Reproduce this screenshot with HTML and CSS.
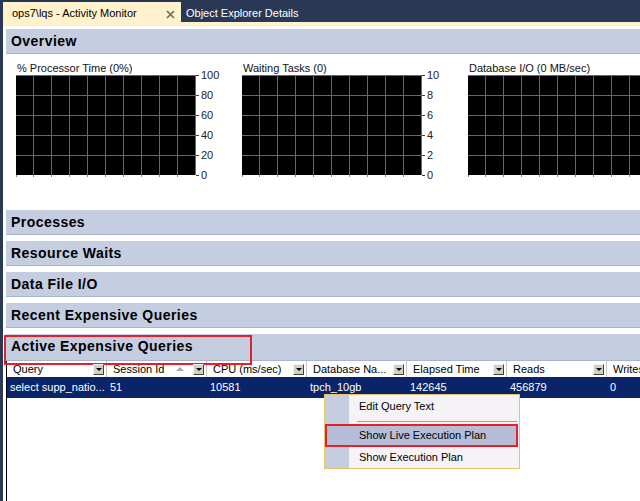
FILE: index.html
```html
<!DOCTYPE html>
<html>
<head>
<meta charset="utf-8">
<link rel="stylesheet" href="styles.css">
</head>
<body>
<div class="tabbar">
  <div class="tab tab-active">
    <span>ops7\lqs - Activity Monitor</span>
    <svg class="close" width="9" height="9" viewBox="0 0 9 9"><path d="M1 1L8 8M8 1L1 8" stroke="#6b6b6b" stroke-width="1.7"/></svg>
  </div>
  <div class="tab">Object Explorer Details</div>
</div>
<div class="panel">
  <div class="strip"></div>
  <div class="content">
    <div class="section-header">Overview</div>
    <div class="charts">
      <div class="chart">
        <div class="chart-title">% Processor Time (0%)</div>
        <div class="chart-body">
          <div class="plot-col">
            <svg class="plot" width="180" height="102" viewBox="0 0 180 102" shape-rendering="crispEdges">
              <rect x="0" y="0" width="180" height="100" fill="#000"/>
              <g fill="#22962a">
                <rect x="17" y="0" width="1" height="100"/><rect x="35" y="0" width="1" height="100"/><rect x="53" y="0" width="1" height="100"/><rect x="71" y="0" width="1" height="100"/><rect x="89" y="0" width="1" height="100"/><rect x="107" y="0" width="1" height="100"/><rect x="125" y="0" width="1" height="100"/><rect x="143" y="0" width="1" height="100"/><rect x="161" y="0" width="1" height="100"/><rect x="179" y="0" width="1" height="100"/>
                <rect x="0" y="0" width="180" height="1"/><rect x="0" y="20" width="180" height="1"/><rect x="0" y="40" width="180" height="1"/><rect x="0" y="60" width="180" height="1"/><rect x="0" y="80" width="180" height="1"/>
              </g>
              <g fill="#8a8a8a">
                <rect x="0" y="100" width="1" height="2"/><rect x="17" y="100" width="1" height="2"/><rect x="35" y="100" width="1" height="2"/><rect x="53" y="100" width="1" height="2"/><rect x="71" y="100" width="1" height="2"/><rect x="89" y="100" width="1" height="2"/><rect x="107" y="100" width="1" height="2"/><rect x="125" y="100" width="1" height="2"/><rect x="143" y="100" width="1" height="2"/><rect x="161" y="100" width="1" height="2"/>
              </g>
            </svg>
          </div>
          <div class="rticks"></div>
          <div class="axis"><span>100</span><span>80</span><span>60</span><span>40</span><span>20</span><span>0</span></div>
        </div>
      </div>
      <div class="chart">
        <div class="chart-title">Waiting Tasks (0)</div>
        <div class="chart-body">
          <div class="plot-col">
            <svg class="plot" width="180" height="102" viewBox="0 0 180 102" shape-rendering="crispEdges">
              <rect x="0" y="0" width="180" height="100" fill="#000"/>
              <g fill="#22962a">
                <rect x="17" y="0" width="1" height="100"/><rect x="35" y="0" width="1" height="100"/><rect x="53" y="0" width="1" height="100"/><rect x="71" y="0" width="1" height="100"/><rect x="89" y="0" width="1" height="100"/><rect x="107" y="0" width="1" height="100"/><rect x="125" y="0" width="1" height="100"/><rect x="143" y="0" width="1" height="100"/><rect x="161" y="0" width="1" height="100"/><rect x="179" y="0" width="1" height="100"/>
                <rect x="0" y="0" width="180" height="1"/><rect x="0" y="20" width="180" height="1"/><rect x="0" y="40" width="180" height="1"/><rect x="0" y="60" width="180" height="1"/><rect x="0" y="80" width="180" height="1"/>
              </g>
              <g fill="#8a8a8a">
                <rect x="0" y="100" width="1" height="2"/><rect x="17" y="100" width="1" height="2"/><rect x="35" y="100" width="1" height="2"/><rect x="53" y="100" width="1" height="2"/><rect x="71" y="100" width="1" height="2"/><rect x="89" y="100" width="1" height="2"/><rect x="107" y="100" width="1" height="2"/><rect x="125" y="100" width="1" height="2"/><rect x="143" y="100" width="1" height="2"/><rect x="161" y="100" width="1" height="2"/>
              </g>
            </svg>
          </div>
          <div class="rticks"></div>
          <div class="axis"><span>10</span><span>8</span><span>6</span><span>4</span><span>2</span><span>0</span></div>
        </div>
      </div>
      <div class="chart">
        <div class="chart-title">Database I/O (0 MB/sec)</div>
        <div class="chart-body">
          <div class="plot-col">
            <svg class="plot" width="180" height="102" viewBox="0 0 180 102" shape-rendering="crispEdges">
              <rect x="0" y="0" width="180" height="100" fill="#000"/>
              <g fill="#22962a">
                <rect x="17" y="0" width="1" height="100"/><rect x="35" y="0" width="1" height="100"/><rect x="53" y="0" width="1" height="100"/><rect x="71" y="0" width="1" height="100"/><rect x="89" y="0" width="1" height="100"/><rect x="107" y="0" width="1" height="100"/><rect x="125" y="0" width="1" height="100"/><rect x="143" y="0" width="1" height="100"/><rect x="161" y="0" width="1" height="100"/><rect x="179" y="0" width="1" height="100"/>
                <rect x="0" y="0" width="180" height="1"/><rect x="0" y="20" width="180" height="1"/><rect x="0" y="40" width="180" height="1"/><rect x="0" y="60" width="180" height="1"/><rect x="0" y="80" width="180" height="1"/>
              </g>
              <g fill="#8a8a8a">
                <rect x="0" y="100" width="1" height="2"/><rect x="17" y="100" width="1" height="2"/><rect x="35" y="100" width="1" height="2"/><rect x="53" y="100" width="1" height="2"/><rect x="71" y="100" width="1" height="2"/><rect x="89" y="100" width="1" height="2"/><rect x="107" y="100" width="1" height="2"/><rect x="125" y="100" width="1" height="2"/><rect x="143" y="100" width="1" height="2"/><rect x="161" y="100" width="1" height="2"/>
              </g>
            </svg>
          </div>
        </div>
      </div>
    </div>
    <div class="section-header gap">Processes</div>
    <div class="section-header gap">Resource Waits</div>
    <div class="section-header gap">Data File I/O</div>
    <div class="section-header gap">Recent Expensive Queries</div>
    <div class="section-header tall marked">Active Expensive Queries</div>
    <div class="grid">
      <div class="grid-head">
        <div class="hcell"><span>Query</span><i class="dd"></i></div>
        <div class="hcell"><span>Session Id</span><i class="sort"></i><i class="dd"></i></div>
        <div class="hcell"><span>CPU (ms/sec)</span><i class="dd"></i></div>
        <div class="hcell"><span>Database Na...</span><i class="dd"></i></div>
        <div class="hcell"><span>Elapsed Time</span><i class="dd"></i></div>
        <div class="hcell"><span>Reads</span><i class="dd"></i></div>
        <div class="hcell"><span>Writes</span><i class="dd"></i></div>
      </div>
      <div class="grid-row selected">
        <div class="cell">select supp_natio...</div>
        <div class="cell">51</div>
        <div class="cell">10581</div>
        <div class="cell">tpch_10gb</div>
        <div class="cell">142645</div>
        <div class="cell">456879</div>
        <div class="cell">0</div>
      </div>
    </div>
  </div>
</div>
<div class="context-menu">
  <div class="menu-item first">Edit Query Text</div>
  <div class="menu-sep"></div>
  <div class="menu-item hover">Show Live Execution Plan</div>
  <div class="menu-item last">Show Execution Plan</div>
</div>
</body>
</html>
```

FILE: styles.css
```css
* { box-sizing: border-box; }
html, body {
  margin: 0;
  padding: 0;
}
body {
  width: 640px;
  height: 501px;
  overflow: hidden;
  background: #293955;
  font-family: "Liberation Sans", Arial, sans-serif;
  font-size: 11px;
  color: #000;
  position: relative;
}

/* tabs */
.tabbar {
  height: 22px;
  display: flex;
  align-items: flex-end;
  padding-left: 3px;
}
.tab {
  height: 20px;
  line-height: 22px;
  white-space: nowrap;
  color: #fff;
  padding-left: 5px;
}
.tab-active {
  width: 178px;
  background: #fff2cc;
  color: #000;
  padding: 0 6px 0 9px;
  display: flex;
  justify-content: space-between;
  align-items: flex-start;
}
.tab-active .close {
  margin-top: 8px;
}

/* panel */
.panel {
  margin-left: 3px;
  height: 479px;
  background: #fff;
  display: flex;
  flex-direction: column;
}
.strip {
  height: 4px;
  background: #fff1c9;
  flex-shrink: 0;
}
.content {
  flex: 1;
  padding: 3px 0 0 3px;
  display: flex;
  flex-direction: column;
  min-height: 0;
}

.section-header {
  height: 25px;
  flex-shrink: 0;
  background: #c5cde0;
  border-bottom: 1px solid #aab4cb;
  font-weight: bold;
  font-size: 14px;
  letter-spacing: 0.45px;
  line-height: 24px;
  padding-left: 5px;
  color: #000;
}
.section-header.gap { margin-bottom: 6px; }
.section-header.tall { height: 27px; }
.section-header.marked { position: relative; }
.section-header.marked::after {
  content: "";
  position: absolute;
  left: -2px;
  top: 1px;
  width: 244px;
  height: 26px;
  border: 2px solid #e6202a;
}

/* charts */
.charts {
  height: 156px;
  flex-shrink: 0;
  display: flex;
  padding: 7px 0 0 10px;
  overflow: hidden;
}
.chart {
  width: 226px;
  flex-shrink: 0;
  display: flex;
  flex-direction: column;
}
.chart-title {
  height: 14px;
  line-height: 14px;
  padding-left: 1px;
  color: #111;
  white-space: nowrap;
}
.chart-body {
  display: flex;
  align-items: flex-start;
}
.plot-col {
  flex-shrink: 0;
}
.plot { display: block; }
.rticks {
  width: 3px;
  height: 101px;
  flex-shrink: 0;
  background-image: linear-gradient(to bottom, #3a3a3a 1px, transparent 1px);
  background-size: 100% 20px;
  background-repeat: repeat-y;
}
.axis {
  margin-top: -6px;
  margin-left: 2px;
  height: 112px;
  display: flex;
  flex-direction: column;
  justify-content: space-between;
  line-height: 12px;
  color: #222;
}

/* grid */
.grid {
  flex: 1;
  border-left: 1px solid #000;
  background: #fff;
  min-height: 0;
  overflow: hidden;
}
.grid-head {
  height: 16px;
  display: flex;
  white-space: nowrap;
}
.hcell {
  width: 100px;
  flex-shrink: 0;
  display: flex;
  align-items: center;
  padding-left: 6px;
  border-right: 1px solid #c6c6c6;
  line-height: 16px;
}
.hcell span { margin-right: auto; }
.dd {
  width: 11px;
  height: 11px;
  margin-right: 2px;
  background: #d4d0c8;
  border-style: solid;
  border-width: 1px;
  border-color: #f4f4f4 #404040 #404040 #f4f4f4;
  position: relative;
  flex-shrink: 0;
}
.dd::after {
  content: "";
  position: absolute;
  left: 2px;
  top: 3px;
  border-left: 3px solid transparent;
  border-right: 3px solid transparent;
  border-top: 3px solid #000;
}
.sort {
  width: 0;
  height: 0;
  border-left: 4px solid transparent;
  border-right: 4px solid transparent;
  border-bottom: 4px solid #a9a9a9;
  margin-right: 9px;
}
.grid-row {
  height: 21px;
  display: flex;
  white-space: nowrap;
}
.grid-row.selected {
  background: #0a246a;
  color: #fff;
}
.cell {
  width: 100px;
  flex-shrink: 0;
  padding-left: 3px;
  line-height: 21px;
}

/* context menu */
.context-menu {
  position: absolute;
  left: 324px;
  top: 394px;
  width: 196px;
  height: 75px;
  border: 1px solid #e4c46c;
  background: linear-gradient(to right, #c5cde0 24px, #f6f3f6 24px);
  display: flex;
  flex-direction: column;
}
.menu-item {
  padding-left: 34px;
  white-space: nowrap;
  color: #000;
}
.menu-item.first { height: 22px; line-height: 22px; }
.menu-item.last { height: 21px; line-height: 21px; }
.menu-item.hover {
  height: 23px;
  line-height: 19px;
  margin-right: 1px;
  padding-left: 32px;
  background: #b5bdd8;
  border: 2px solid #e6202a;
}
.menu-sep {
  height: 1px;
  margin: 4px 2px 2px 32px;
  background: #9c9eb2;
}
```
